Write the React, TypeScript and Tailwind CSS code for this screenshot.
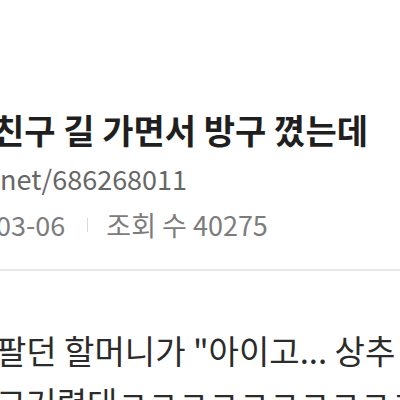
import React from 'react';

const font = { fontFamily: '"Noto Sans CJK KR", "Noto Sans", sans-serif' };

const App = () => {
  return (
    <div className="w-[400px] h-[400px] overflow-hidden bg-white" style={font}>
      <div className="pt-[108px] whitespace-nowrap">
        <h1 className="-ml-[7px] text-[34px] leading-[44px] font-bold text-[#1f1f1f]">
          친구 길 가면서 방구 꼈는데
        </h1>
        <div className="mt-[7px] text-[27px] leading-[40px] text-[#666]">net/686268011</div>
        <div className="mt-[6px] -ml-[4px] flex items-center text-[27px] leading-[40px] text-[#7c7c7c]">
          <span>03-06</span>
          <span className="ml-[22px] mr-[18px] h-[14px] w-px bg-[#d9d9d9]" />
          <span>조회 수 40275</span>
        </div>
        <div className="mt-[24px] h-[2px] bg-[#e6e6e6]" />
        <div className="mt-[53px] -ml-[4px] text-[33px] leading-[52px] text-[#2b2b2b]">
          <p>팔던 할머니가 "아이고... 상추 좀 사가라고</p>
          <p>그거렸대ㅋㅋㅋㅋㅋㅋㅋㅋㅋㅋㅋㅋㅋ</p>
        </div>
      </div>
    </div>
  );
};

export default App;
